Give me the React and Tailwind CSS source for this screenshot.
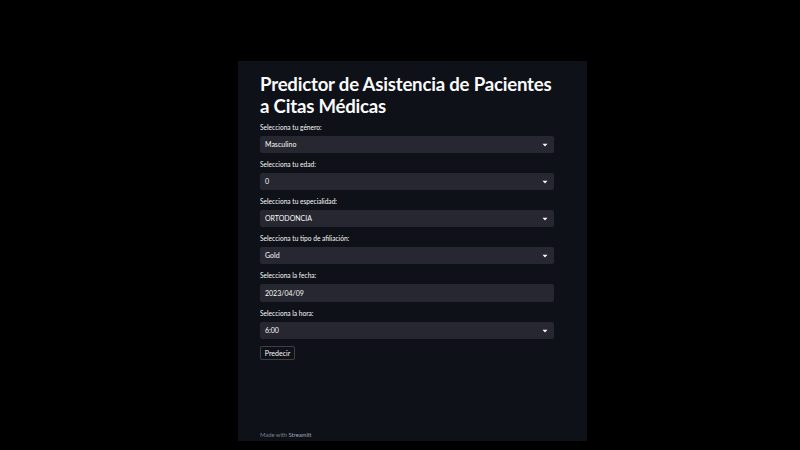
import React from "react";

const font = { fontFamily: '"Source Sans Pro", "Lato", "Noto Sans", sans-serif' };

function Caret() {
  return (
    <svg width="6" height="4" viewBox="0 0 6 4" className="shrink-0">
      <path d="M0.5 0.8 H5.5 L3 3.4 Z" fill="#fafafa" />
    </svg>
  );
}

function Field({ label, value, select = true, tall = false }) {
  return (
    <div className="flex flex-col">
      <div className="h-[10px] leading-[10px] text-[6.6px] text-[#fafafa] mb-[4px]">{label}</div>
      <div
        className={`${tall ? "h-[18px]" : "h-[17px]"} rounded-[2px] bg-[#262730] flex items-center justify-between pl-[5px] pr-[6px] text-[7px] text-[#fafafa]`}
      >
        <span>{value}</span>
        {select && <Caret />}
      </div>
    </div>
  );
}

export default function App() {
  return (
    <div className="w-[800px] h-[450px] bg-black pt-[61px] pl-[238px] overflow-hidden" style={font}>
      <div className="w-[349px] h-[380px] bg-[#0e1117] pl-[22px] pr-[33px] flex flex-col">
        <h1 className="mt-[12px] text-[18.6px] leading-[22px] font-bold text-[#fafafa] tracking-[-0.2px]">
          Predictor de Asistencia de Pacientes a Citas Médicas
        </h1>
        <div className="mt-[5px] flex flex-col gap-[6px]">
          <Field label="Selecciona tu género:" value="Masculino" />
          <Field label="Selecciona tu edad:" value="0" />
          <Field label="Selecciona tu especialidad:" value="ORTODONCIA" />
          <Field label="Selecciona tu tipo de afiliación:" value="Gold" />
          <Field label="Selecciona la fecha:" value="2023/04/09" select={false} tall />
          <Field label="Selecciona la hora:" value="6:00" />
        </div>
        <div className="mt-[7px]">
          <button className="h-[14px] w-[35px] rounded-[2px] border border-[rgba(250,250,250,0.2)] bg-[#0e1117] text-[7px] text-[#fafafa] flex items-center justify-center">
            Predecir
          </button>
        </div>
        <div className="mt-auto mb-[2px] text-[5.8px] leading-[8px] text-[#7d808f]">
          Made with <span className="text-[#a3a6b3]">Streamlit</span>
        </div>
      </div>
    </div>
  );
}
